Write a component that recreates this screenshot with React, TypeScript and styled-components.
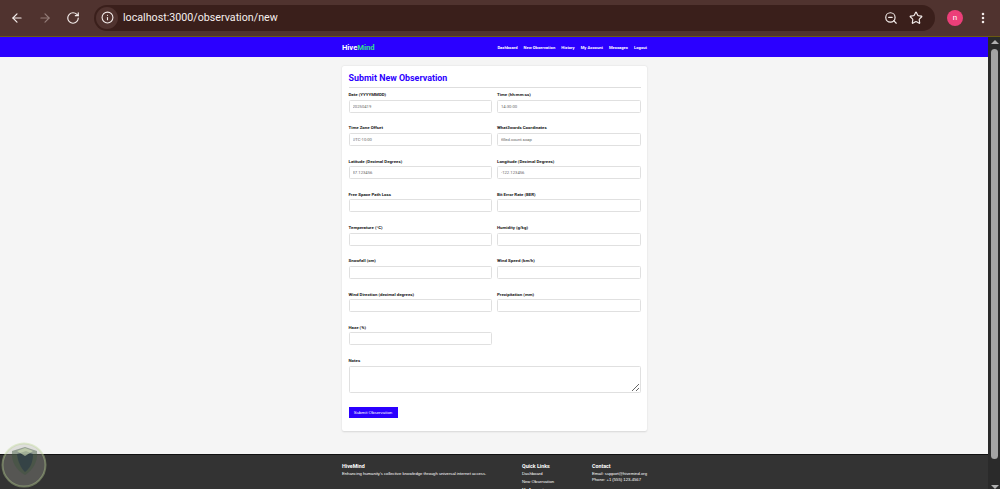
import styled, { createGlobalStyle } from "styled-components";
import { ArrowLeft, ArrowRight, EllipsisVertical, Info, RotateCw, Star, ZoomOut } from "lucide-react";

const GlobalStyle = createGlobalStyle`
  html, body {
    margin: 0;
    height: 100%;
    overflow: hidden;
    background: #f5f5f5;
  }
  * {
    box-sizing: border-box;
  }
`;

const Screen = styled.div`
  position: relative;
  width: 1000px;
  height: 489px;
  display: flex;
  flex-direction: column;
  overflow: hidden;
  font-family: "Liberation Sans", Arial, sans-serif;
`;

const BrowserBar = styled.div`
  height: 37px;
  flex: none;
  display: flex;
  align-items: center;
  padding: 0 9px 1px 10px;
  background: #50332f;
  border-bottom: 1px solid #6b5a10;
  color: #f3ecea;
`;

const NavIcon = styled.span<{ $dim?: boolean }>`
  width: 14px;
  height: 14px;
  margin-right: 14px;
  display: flex;
  color: ${(p) => (p.$dim ? "#947d79" : "#f5eeec")};
`;

const Omnibox = styled.div`
  width: 841px;
  height: 26px;
  flex: none;
  padding-right: 1px;
  display: flex;
  align-items: center;
  border-radius: 13px;
  background: #3a1f1b;
`;

const SiteInfo = styled.span`
  width: 22px;
  height: 22px;
  margin-left: 2px;
  margin-right: 5px;
  display: flex;
  align-items: center;
  justify-content: center;
  border-radius: 50%;
  background: #50332f;
`;

const Url = styled.span`
  flex: 1;
  font-family: Roboto, sans-serif;
  font-size: 10.7px;
  color: #f6f0ee;
`;

const OmniAction = styled.span`
  width: 14px;
  height: 14px;
  margin-right: 11px;
  display: flex;
`;

const Avatar = styled.span`
  width: 16px;
  height: 16px;
  flex: none;
  margin-left: 12px;
  margin-right: 13px;
  display: flex;
  align-items: center;
  justify-content: center;
  border-radius: 50%;
  background: #ec3f79;
  color: #fff;
  font-family: Roboto, sans-serif;
  font-size: 8px;
`;

const MenuIcon = styled.span`
  width: 14px;
  height: 14px;
  display: flex;
`;

const Viewport = styled.div`
  flex: 1;
  min-height: 0;
  display: flex;
`;

const Page = styled.div`
  flex: 1;
  min-width: 0;
  display: flex;
  flex-direction: column;
  overflow: hidden;
`;

const Header = styled.header`
  height: 20px;
  flex: none;
  background: #2b00ff;
`;

const Wrap = styled.div`
  width: 305px;
  margin-left: 342px;
`;

const HeaderInner = styled(Wrap)`
  height: 100%;
  display: flex;
  align-items: center;
  justify-content: space-between;
  font-family: Roboto, sans-serif;
`;

const Logo = styled.div`
  font-size: 7.6px;
  font-weight: 700;
  color: #fff;
`;

const LogoAccent = styled.span`
  color: #35e08a;
`;

const NavLinks = styled.nav`
  display: flex;
  gap: 6px;
`;

const NavLink = styled.a`
  font-size: 4.15px;
  font-weight: 700;
  color: #fff;
`;

const Main = styled.main`
  height: 397px;
  flex: none;
  padding-top: 9px;
  background: #f5f5f5;
`;

const Card = styled(Wrap)`
  height: 365px;
  padding: 7px 6.5px 0 6.5px;
  background: #fff;
  border-radius: 2px;
  box-shadow: 0 0.5px 2px rgba(0, 0, 0, 0.13);
`;

const Title = styled.h1`
  margin: 0;
  height: 15px;
  font-family: Roboto, sans-serif;
  font-size: 8.9px;
  font-weight: 700;
  line-height: 11px;
  color: #2b00ff;
  border-bottom: 1px solid #dedede;
`;

const FieldGrid = styled.div`
  display: grid;
  grid-template-columns: 143.5px 143.5px;
  column-gap: 5px;
  row-gap: 12.75px;
  margin-top: 4px;
`;

const Field = styled.div<{ $wide?: boolean }>`
  display: flex;
  flex-direction: column;
  grid-column: ${(p) => (p.$wide ? "1 / -1" : "auto")};
`;

const Label = styled.label`
  height: 7.5px;
  font-family: Roboto, sans-serif;
  font-size: 4.4px;
  font-weight: 700;
  line-height: 6px;
  color: #222;
`;

const Input = styled.input`
  width: 100%;
  height: 13px;
  padding: 0 3px;
  border: 1px solid #e0e0e0;
  border-radius: 1.5px;
  background: #fff;
  font-family: Roboto, sans-serif;
  font-size: 4.2px;
  color: #666;
  outline: none;
`;

const Notes = styled.textarea`
  display: block;
  width: 100%;
  height: 27px;
  padding: 2px 3px;
  border: 1px solid #e0e0e0;
  border-radius: 1.5px;
  background: #fff;
  font-size: 4.4px;
  outline: none;
`;

const Submit = styled.button`
  display: block;
  width: 49px;
  height: 11px;
  margin-top: 2px;
  padding: 0;
  border: none;
  background: #2b00ff;
  font-family: "Liberation Sans", Arial, sans-serif;
  font-size: 4.4px;
  color: #fff;
`;

const Footer = styled.footer`
  flex: 1;
  background: #333;
  border-top: 1px solid #111;
  overflow: hidden;
`;

const FooterInner = styled(Wrap)`
  display: flex;
  padding-top: 8px;
  color: #fff;
`;

const FooterCol = styled.div<{ $width: number }>`
  width: ${(p) => p.$width}px;
  flex: none;
`;

const FooterHeading = styled.div`
  height: 7.5px;
  font-family: Roboto, sans-serif;
  font-size: 5.3px;
  font-weight: 700;
  line-height: 7px;
`;

const FooterText = styled.div<{ $height?: number }>`
  height: ${(p) => p.$height ?? 6.3}px;
  font-size: 4.2px;
  line-height: 6.3px;
  white-space: nowrap;
`;

const Scrollbar = styled.div`
  width: 12px;
  flex: none;
  padding-left: 1px;
  display: flex;
  flex-direction: column;
  align-items: center;
  background: #2a2a2a;
`;

const ScrollArrow = styled.span<{ $down?: boolean }>`
  width: 0;
  height: 0;
  margin: ${(p) => (p.$down ? "auto 0 0" : "3px 0 5px")};
  border-left: 4px solid transparent;
  border-right: 4px solid transparent;
  border-bottom: ${(p) => (p.$down ? "0" : "4px solid #b0b0b0")};
  border-top: ${(p) => (p.$down ? "4px solid #b0b0b0" : "0")};
`;

const ScrollThumb = styled.span`
  width: 7px;
  height: 410px;
  border-radius: 4px;
  background: #a3a3a3;
`;

const Watermark = styled.svg`
  position: absolute;
  left: 1px;
  bottom: 1px;
  width: 46px;
  height: 46px;
  pointer-events: none;
`;

const fields = [
  { label: "Date (YYYYMMDD)", value: "20250419" },
  { label: "Time (hh:mm:ss)", value: "14:30:00" },
  { label: "Time Zone Offset", value: "UTC-10:00" },
  { label: "What3words Coordinates", value: "filled.count.soap" },
  { label: "Latitude (Decimal Degrees)", value: "37.123456" },
  { label: "Longitude (Decimal Degrees)", value: "-122.123456" },
  { label: "Free Space Path Loss", value: "" },
  { label: "Bit Error Rate (BER)", value: "" },
  { label: "Temperature (°C)", value: "" },
  { label: "Humidity (g/kg)", value: "" },
  { label: "Snowfall (cm)", value: "" },
  { label: "Wind Speed (km/h)", value: "" },
  { label: "Wind Direction (decimal degrees)", value: "" },
  { label: "Precipitation (mm)", value: "" },
  { label: "Haze (%)", value: "" },
];

const links = ["Dashboard", "New Observation", "History", "My Account", "Messages", "Logout"];

const App = () => {
  return (
    <Screen>
      <GlobalStyle />
      <BrowserBar>
        <NavIcon><ArrowLeft size={14} strokeWidth={2} /></NavIcon>
        <NavIcon $dim><ArrowRight size={14} strokeWidth={2} /></NavIcon>
        <NavIcon><RotateCw size={14} strokeWidth={2} /></NavIcon>
        <Omnibox>
          <SiteInfo><Info size={13} strokeWidth={2} /></SiteInfo>
          <Url>localhost:3000/observation/new</Url>
          <OmniAction><ZoomOut size={14} strokeWidth={2} /></OmniAction>
          <OmniAction><Star size={14} strokeWidth={2} /></OmniAction>
        </Omnibox>
        <Avatar>n</Avatar>
        <MenuIcon><EllipsisVertical size={14} strokeWidth={2.4} /></MenuIcon>
      </BrowserBar>
      <Viewport>
        <Page>
          <Header>
            <HeaderInner>
              <Logo>Hive<LogoAccent>Mind</LogoAccent></Logo>
              <NavLinks>
                {links.map((link) => <NavLink key={link}>{link}</NavLink>)}
              </NavLinks>
            </HeaderInner>
          </Header>
          <Main>
            <Card>
              <Title>Submit New Observation</Title>
              <FieldGrid>
                {fields.map((field) => (
                  <Field key={field.label}>
                    <Label>{field.label}</Label>
                    <Input defaultValue={field.value} />
                  </Field>
                ))}
                <Field $wide>
                  <Label>Notes</Label>
                  <Notes />
                </Field>
                <Field $wide>
                  <Submit>Submit Observation</Submit>
                </Field>
              </FieldGrid>
            </Card>
          </Main>
          <Footer>
            <FooterInner>
              <FooterCol $width={180}>
                <FooterHeading>HiveMind</FooterHeading>
                <FooterText>Enhancing humanity's collective knowledge through universal internet access.</FooterText>
              </FooterCol>
              <FooterCol $width={70}>
                <FooterHeading>Quick Links</FooterHeading>
                <FooterText $height={8}>Dashboard</FooterText>
                <FooterText $height={8}>New Observation</FooterText>
                <FooterText>My Account</FooterText>
              </FooterCol>
              <FooterCol $width={55}>
                <FooterHeading>Contact</FooterHeading>
                <FooterText>Email: support@hivemind.org</FooterText>
                <FooterText>Phone: +1 (555) 123-4567</FooterText>
              </FooterCol>
            </FooterInner>
          </Footer>
        </Page>
        <Scrollbar>
          <ScrollArrow />
          <ScrollThumb />
          <ScrollArrow $down />
        </Scrollbar>
      </Viewport>
      <Watermark viewBox="0 0 46 46">
        <circle cx="23" cy="23" r="21.5" fill="rgba(170,170,160,0.3)" stroke="rgba(190,215,150,0.4)" strokeWidth="2" />
        <path d="M11 9 L24 5 L36 9 C37 20 32 28 24 33 C15 28 10 20 11 9 Z" fill="rgba(60,85,60,0.45)" />
        <path d="M16 12 L25 9 L32 12 C32 21 29 26 24 30 C20 26 17 20 16 12 Z" fill="rgba(40,55,70,0.6)" />
        <path d="M16 9 L24 6 L32 9 L24 14 Z" fill="rgba(215,228,185,0.6)" />
      </Watermark>
    </Screen>
  );
};

export default App;
